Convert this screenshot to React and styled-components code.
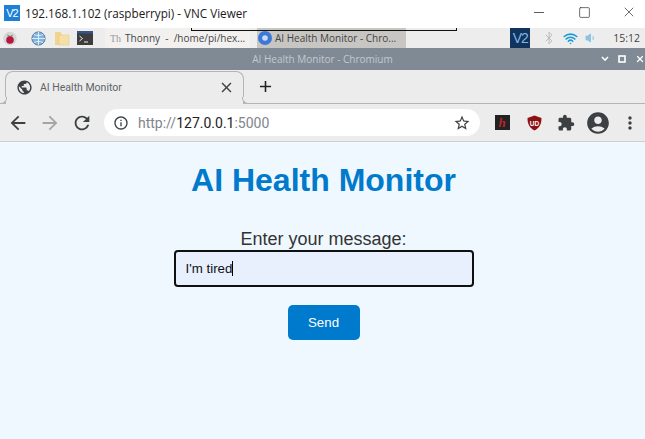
import styled, { createGlobalStyle } from 'styled-components';
import { Bluetooth, Wifi, Volume1, Minus, Square, X } from 'lucide-react';
import {
  MdAccountCircle,
  MdAdd,
  MdArrowBack,
  MdArrowForward,
  MdClose,
  MdExtension,
  MdInfoOutline,
  MdMoreVert,
  MdPublic,
  MdRefresh,
  MdStarBorder,
} from 'react-icons/md';

const GlobalStyle = createGlobalStyle`
  html, body {
    margin: 0;
    padding: 0;
    width: 645px;
    height: 439px;
    overflow: hidden;
    font-family: 'Liberation Sans', Arial, sans-serif;
    background: #f0f8ff;
  }
`;

const Shell = styled.div`
  position: relative;
  width: 645px;
  height: 439px;
  display: flex;
  flex-direction: column;
`;

const VncBar = styled.div`
  height: 28px;
  box-sizing: border-box;
  background: #fff;
  display: flex;
  align-items: center;
  padding: 0 0 2px 4px;
  color: #1a1a1a;
  font-family: 'Open Sans', sans-serif;
  font-size: 11.7px;
`;

const VncLogo = styled.div`
  width: ${({ $size }) => $size}px;
  height: ${({ $size }) => $size}px;
  background: ${({ $dark }) => ($dark ? '#12335c' : '#1d7fd6')};
  color: ${({ $dark }) => ($dark ? '#7fb8ea' : '#fff')};
  font-family: 'Liberation Sans', sans-serif;
  font-size: ${({ $size }) => Math.round($size * 0.68)}px;
  line-height: ${({ $size }) => $size}px;
  text-align: center;
  letter-spacing: -1px;
  margin-right: ${({ $mr }) => $mr}px;
  flex: none;
`;

const VncTitle = styled.div`
  flex: 1;
  white-space: nowrap;
`;

const WinButtons = styled.div`
  display: flex;
  gap: 29px;
  padding: 0 8px 2px 0;
  color: #222;
`;

const WinButton = styled.div`
  width: 16px;
  height: 18px;
  display: flex;
  align-items: center;
  justify-content: center;
`;

const Tooltip = styled.div`
  position: absolute;
  left: 191px;
  top: 28px;
  width: 264px;
  height: 2px;
  border: solid #111;
  border-width: 0 1px 1px 1px;
`;

const Taskbar = styled.div`
  height: 20px;
  background: #eeeded;
  display: flex;
  align-items: center;
  padding-left: 2px;
  font-family: 'Open Sans', sans-serif;
  font-size: 10px;
  color: #444;
`;

const Launcher = styled.div`
  width: 16px;
  height: 20px;
  margin-left: ${({ $ml }) => $ml || 0}px;
  display: flex;
  align-items: center;
  justify-content: center;
  flex: none;
`;

const TaskItem = styled.div`
  width: ${({ $w }) => $w}px;
  height: 20px;
  margin-left: ${({ $ml }) => $ml}px;
  display: flex;
  align-items: center;
  gap: ${({ $active }) => ($active ? 3 : 4)}px;
  padding-left: ${({ $active }) => ($active ? 1 : 5)}px;
  box-sizing: border-box;
  background: ${({ $active }) => ($active ? '#c8c6c3' : '#f2f1f0')};
  white-space: nowrap;
  overflow: hidden;
  flex: none;
`;

const ThonnyMark = styled.span`
  color: #999;
  font-family: 'Liberation Serif', serif;
`;

const Tray = styled.div`
  margin-left: auto;
  display: flex;
  align-items: center;
  height: 20px;
  padding-right: 5px;
`;

const TrayIcon = styled.div`
  display: flex;
  margin-left: 7px;
`;

const Clock = styled.div`
  margin-left: 16px;
  font-size: 10.5px;
  color: #444;
`;

const ChromeTitle = styled.div`
  position: relative;
  height: 22px;
  background: #7f8a95;
  color: #c3c9cf;
  font-family: 'Open Sans', sans-serif;
  font-size: 10px;
  display: flex;
  align-items: center;
  justify-content: center;
`;

const TitleControls = styled.div`
  position: absolute;
  right: 0;
  top: 0;
  height: 22px;
  display: flex;
  align-items: center;
  gap: 9px;
  color: #fff;
`;

const TabStrip = styled.div`
  height: 34px;
  background: #ececec;
  display: flex;
  align-items: flex-end;
  padding-left: 5px;
  border-bottom: 1px solid #b4b4b4;
  box-sizing: border-box;
`;

const Tab = styled.div`
  position: relative;
  width: 239px;
  height: 33px;
  box-sizing: border-box;
  background: #ececec;
  border: 1px solid #b4b4b4;
  border-bottom: none;
  border-radius: 8px 8px 0 0;
  margin-bottom: -1px;
  display: flex;
  align-items: center;
  padding: 0 8px 1px 10px;
  color: #5f6368;
  font-family: Roboto, sans-serif;
  font-size: 10.5px;
  &::before,
  &::after {
    content: '';
    position: absolute;
    bottom: 0;
    width: 6px;
    height: 6px;
    background: #ececec;
    border-bottom: 1px solid #b4b4b4;
  }
  &::before {
    left: -6px;
    border-right: 1px solid #b4b4b4;
    border-bottom-right-radius: 6px;
  }
  &::after {
    right: -6px;
    border-left: 1px solid #b4b4b4;
    border-bottom-left-radius: 6px;
  }
`;

const TabLabel = styled.div`
  flex: 1;
  margin-left: 7px;
`;

const NewTab = styled.div`
  margin: 0 0 3px 12px;
  height: 28px;
  display: flex;
  align-items: center;
  color: #222;
`;

const Toolbar = styled.div`
  height: 37px;
  background: #ececec;
  border-bottom: 1px solid #cfcfcf;
  display: flex;
  align-items: center;
  padding-left: 2px;
  flex: none;
`;

const NavButton = styled.div`
  width: 32px;
  display: flex;
  justify-content: center;
  color: ${({ $off }) => ($off ? '#a3a5a8' : '#3c4043')};
  flex: none;
`;

const Omnibox = styled.div`
  width: 376px;
  height: 27px;
  margin-left: 6px;
  border-radius: 14px;
  background: #fff;
  display: flex;
  align-items: center;
  padding: 0 9px;
  box-sizing: border-box;
  font-family: Roboto, sans-serif;
  font-size: 14px;
  color: #80868b;
  flex: none;
`;

const UrlText = styled.div`
  flex: 1;
  margin-left: 9px;
  span {
    color: #222;
  }
`;

const OmniIcon = styled.div`
  display: flex;
  color: #3c4043;
`;

const Extensions = styled.div`
  flex: 1;
  display: flex;
  align-items: center;
  margin-left: 6px;
  color: #3c4043;
`;

const ExtSlot = styled.div`
  width: 32px;
  display: flex;
  justify-content: center;
  flex: none;
`;

const HBadge = styled.div`
  width: 15px;
  height: 15px;
  background: #222;
  color: #b3262a;
  font-family: 'Liberation Serif', serif;
  font-style: italic;
  font-weight: bold;
  font-size: 13px;
  line-height: 15px;
  text-align: center;
`;

const Page = styled.main`
  flex: 1;
  background: #f0f8ff;
  display: flex;
  flex-direction: column;
  align-items: center;
  padding-left: 2px;
`;

const Heading = styled.h1`
  margin: 20px 0 0;
  font-size: 32px;
  line-height: 37px;
  font-weight: bold;
  color: #007acc;
`;

const Label = styled.label`
  margin-top: 30px;
  font-size: 18px;
  line-height: 20px;
  color: #333;
`;

const Field = styled.div`
  width: 300px;
  height: 37px;
  margin-top: 1px;
  box-sizing: border-box;
  border: 2px solid #101010;
  border-radius: 4px;
  background: #e8f0fe;
  display: flex;
  align-items: center;
  padding-left: 10px;
  font-size: 13.3px;
  color: #111;
`;

const Caret = styled.span`
  width: 1px;
  height: 15px;
  background: #000;
`;

const SendButton = styled.button`
  width: 72px;
  height: 35px;
  margin-top: 18px;
  border: none;
  border-radius: 5px;
  background: #007acc;
  color: #fff;
  font-family: 'Liberation Sans', sans-serif;
  font-size: 13.3px;
`;

const App = () => (
  <Shell>
    <GlobalStyle />
    <VncBar>
      <VncLogo $size={16} $mr={5}>V2</VncLogo>
      <VncTitle>192.168.1.102 (raspberrypi) - VNC Viewer</VncTitle>
      <WinButtons>
        <WinButton><Minus size={17} strokeWidth={1.1} /></WinButton>
        <WinButton><Square size={13} strokeWidth={1.2} /></WinButton>
        <WinButton><X size={18} strokeWidth={1} /></WinButton>
      </WinButtons>
    </VncBar>
    <Tooltip />
    <Taskbar>
      <Launcher>
        <svg width="14" height="15" viewBox="0 0 14 15">
          <circle cx="7" cy="7.5" r="6.8" fill="#d5d5d5" />
          <path d="M4 3.5 L7 5 L10 3.5 L9 5.5 L5 5.5Z" fill="#4c9a3f" />
          <circle cx="7" cy="9" r="3.8" fill="#b5173f" />
        </svg>
      </Launcher>
      <Launcher $ml={12}>
        <svg width="15" height="15" viewBox="0 0 15 15">
          <circle cx="7.5" cy="7.5" r="6.6" fill="#7fb2dc" stroke="#5a7fa8" />
          <path d="M1 7.5h13M7.5 1v13M3 3.5c3 1.5 6 1.5 9 0M3 11.5c3-1.5 6-1.5 9 0" stroke="#dcebf6" fill="none" />
        </svg>
      </Launcher>
      <Launcher $ml={8}>
        <svg width="16" height="15" viewBox="0 0 16 15">
          <path d="M1 1h6v2h1v11H1z" fill="#f2d58c" />
          <path d="M5 4h10v10H5z" fill="#f6e0a5" stroke="#e3c47a" strokeWidth="0.5" />
        </svg>
      </Launcher>
      <Launcher $ml={7}>
        <svg width="16" height="14" viewBox="0 0 16 14">
          <rect width="16" height="14" fill="#3d3d3d" />
          <rect width="16" height="2.5" fill="#34548a" />
          <path d="M2.5 5l3 2.5-3 2.5M7 11h4" stroke="#eee" fill="none" />
        </svg>
      </Launcher>
      <TaskItem $w={145} $ml={12}>
        <ThonnyMark>Th</ThonnyMark>
        Thonny&nbsp; -&nbsp; /home/pi/hex...
      </TaskItem>
      <TaskItem $w={149} $ml={7} $active>
        <svg width="14" height="14" viewBox="0 0 14 14">
          <circle cx="7" cy="7" r="7" fill="#3d78d8" />
          <circle cx="7" cy="7" r="2.8" fill="#c9dcf5" />
        </svg>
        AI Health Monitor - Chro...
      </TaskItem>
      <Tray>
        <VncLogo $size={20} $mr={12} $dark>V2</VncLogo>
        <Bluetooth size={14} color="#b5b5b5" strokeWidth={1.5} />
        <TrayIcon><Wifi size={15} color="#1b9ad6" strokeWidth={2.6} /></TrayIcon>
        <TrayIcon><Volume1 size={12} color="#8cc4e8" fill="#8cc4e8" /></TrayIcon>
        <Clock>15:12</Clock>
      </Tray>
    </Taskbar>
    <ChromeTitle>
      AI Health Monitor - Chromium
      <TitleControls>
        <svg width="8" height="6" viewBox="0 0 8 6"><path d="M1 1l3 3 3-3" stroke="#fff" strokeWidth="1.6" fill="none" /></svg>
        <svg width="8" height="8" viewBox="0 0 8 8"><rect x="1" y="1" width="6" height="6" stroke="#fff" strokeWidth="1.6" fill="none" /></svg>
        <X size={10} strokeWidth={3} />
      </TitleControls>
    </ChromeTitle>
    <TabStrip>
      <Tab>
        <MdPublic size={17} color="#3c4043" />
        <TabLabel>AI Health Monitor</TabLabel>
        <MdClose size={17} color="#3c4043" />
      </Tab>
      <NewTab><MdAdd size={19} /></NewTab>
    </TabStrip>
    <Toolbar>
      <NavButton><MdArrowBack size={22} /></NavButton>
      <NavButton $off><MdArrowForward size={22} /></NavButton>
      <NavButton><MdRefresh size={22} /></NavButton>
      <Omnibox>
        <OmniIcon><MdInfoOutline size={16} /></OmniIcon>
        <UrlText>http://<span>127.0.0.1</span>:5000</UrlText>
        <OmniIcon><MdStarBorder size={18} /></OmniIcon>
      </Omnibox>
      <Extensions>
        <ExtSlot><HBadge>h</HBadge></ExtSlot>
        <ExtSlot>
          <svg width="15" height="16" viewBox="0 0 15 16">
            <path d="M7.5 0.5L14.5 3c0 6-2 10-7 12.5C2.5 13 .5 9 .5 3z" fill="#8f0f12" />
            <text x="7.5" y="10.5" textAnchor="middle" fontSize="6.5" fontFamily="Liberation Sans" fontWeight="bold" fill="#fff">UD</text>
          </svg>
        </ExtSlot>
        <ExtSlot><MdExtension size={18} /></ExtSlot>
        <ExtSlot><MdAccountCircle size={26} /></ExtSlot>
        <ExtSlot><MdMoreVert size={20} /></ExtSlot>
      </Extensions>
    </Toolbar>
    <Page>
      <Heading>AI Health Monitor</Heading>
      <Label>Enter your message:</Label>
      <Field>I'm tired<Caret /></Field>
      <SendButton>Send</SendButton>
    </Page>
  </Shell>
);

export default App;
